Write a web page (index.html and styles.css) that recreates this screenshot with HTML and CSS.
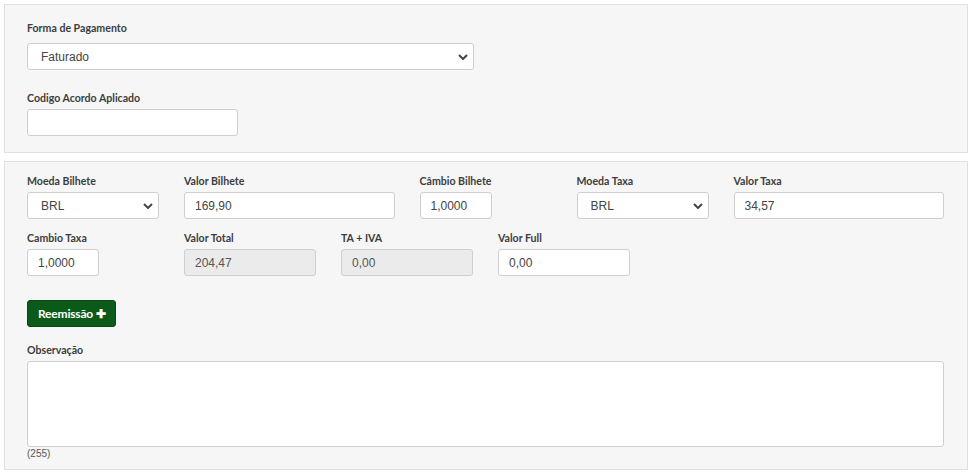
FILE: index.html
```html
<!DOCTYPE html>
<html lang="pt">
<head>
<meta charset="utf-8">
<title>Pagamento</title>
<link rel="stylesheet" href="styles.css">
</head>
<body>
<div class="panel panel-top">
  <div class="field first">
    <label class="lbl">Forma de Pagamento</label>
    <div class="sel-wrap w-446">
      <select class="ctl sel"><option>Faturado</option></select>
      <svg class="chev" viewBox="0 0 10 6" width="10" height="6"><path d="M1 1 L5 5 L9 1" fill="none" stroke="#444" stroke-width="2"/></svg>
    </div>
  </div>
  <div class="field second">
    <label class="lbl">Codigo Acordo Aplicado</label>
    <input class="ctl inp w-210" type="text" value="">
  </div>
</div>

<div class="panel panel-bottom">
  <div class="grid">
    <div class="col c2">
      <label class="lbl">Moeda Bilhete</label>
      <div class="sel-wrap">
        <select class="ctl sel"><option>BRL</option></select>
        <svg class="chev" viewBox="0 0 10 6" width="10" height="6"><path d="M1 1 L5 5 L9 1" fill="none" stroke="#444" stroke-width="2"/></svg>
      </div>
    </div>
    <div class="col c3">
      <label class="lbl">Valor Bilhete</label>
      <input class="ctl inp" type="text" value="169,90">
    </div>
    <div class="col c2">
      <label class="lbl">Câmbio Bilhete</label>
      <input class="ctl inp w-72" type="text" value="1,0000">
    </div>
    <div class="col c2">
      <label class="lbl">Moeda Taxa</label>
      <div class="sel-wrap">
        <select class="ctl sel"><option>BRL</option></select>
        <svg class="chev" viewBox="0 0 10 6" width="10" height="6"><path d="M1 1 L5 5 L9 1" fill="none" stroke="#444" stroke-width="2"/></svg>
      </div>
    </div>
    <div class="col c3">
      <label class="lbl">Valor Taxa</label>
      <input class="ctl inp" type="text" value="34,57">
    </div>
  </div>

  <div class="grid row2">
    <div class="col c2">
      <label class="lbl">Cambio Taxa</label>
      <input class="ctl inp w-72" type="text" value="1,0000">
    </div>
    <div class="col c2">
      <label class="lbl">Valor Total</label>
      <input class="ctl inp disabled" type="text" value="204,47" disabled>
    </div>
    <div class="col c2">
      <label class="lbl">TA + IVA</label>
      <input class="ctl inp disabled" type="text" value="0,00" disabled>
    </div>
    <div class="col c2">
      <label class="lbl">Valor Full</label>
      <input class="ctl inp" type="text" value="0,00">
    </div>
  </div>

  <div class="actions">
    <button class="btn-green" type="button">Reemissão <span class="plus">✚</span></button>
  </div>

  <div class="obs">
    <label class="lbl">Observação</label>
    <textarea class="ctl txt"></textarea>
    <div class="count">(255)</div>
  </div>
</div>
</body>
</html>
```

FILE: styles.css
```css
* { box-sizing: border-box; }

html, body {
  margin: 0;
  background: #ffffff;
}

body {
  padding: 4px 4px 0 4px;
  font-family: Lato, "Liberation Sans", Arial, sans-serif;
  color: #333;
}

.panel {
  background: #f6f6f6;
  border: 1px solid #e0e0e0;
}

.panel-top {
  padding: 15px 23px 16px 22px;
  height: 149px;
}

.panel-bottom {
  margin-top: 8px;
  padding: 11px 23px 0 22px;
  height: 309px;
}

.field { display: flex; flex-direction: column; }
.field.second { margin-top: 20px; }

.lbl {
  display: block;
  font-size: 10.6px;
  font-weight: 700;
  line-height: 16px;
  color: #3d3d3d;
  margin-bottom: 3px;
}

.field.first .lbl { margin-bottom: 7px; }

.ctl {
  font-family: "Liberation Sans", Arial, sans-serif;
  font-size: 12px;
  color: #444;
  background: #fff;
  border: 1px solid #cfcfcf;
  border-radius: 3px;
  outline: none;
  margin: 0;
}

.inp {
  display: block;
  height: 27px;
  width: 100%;
  padding: 0 10px;
}

.inp.disabled {
  background: #ebebeb;
  color: #555;
  -webkit-text-fill-color: #555;
  opacity: 1;
}

.sel-wrap {
  position: relative;
  width: 100%;
}

.sel {
  display: block;
  width: 100%;
  height: 27px;
  padding: 0 24px 0 13px;
  -webkit-appearance: none;
  appearance: none;
}

.chev {
  position: absolute;
  right: 6px;
  top: 11px;
  pointer-events: none;
}

.w-446 { width: 447px; }
.w-210 { width: 211px; height: 27px; }
.w-72 { width: 72px; }

.grid {
  display: grid;
  grid-template-columns: repeat(12, 1fr);
  column-gap: 25px;
}

.row2 { margin-top: 11px; }

.col { display: flex; flex-direction: column; min-width: 0; }
.c2 { grid-column: span 2; }
.c3 { grid-column: span 3; }

.actions { margin-top: 24px; }

.btn-green {
  display: inline-flex;
  align-items: center;
  gap: 3px;
  height: 27px;
  width: 89px;
  padding: 0 10px;
  background: #0b5a19;
  border: 1px solid #094a14;
  border-radius: 3px;
  color: #fff;
  font-family: Lato, "Liberation Sans", Arial, sans-serif;
  font-size: 12px;
  font-weight: 700;
  letter-spacing: -0.2px;
  cursor: pointer;
}

.plus { font-size: 12px; line-height: 1; }

.obs { margin-top: 15px; }

.txt {
  display: block;
  width: 100%;
  height: 86px;
  resize: none;
  padding: 6px 10px;
}

.count {
  font-family: "Liberation Sans", Arial, sans-serif;
  font-size: 10px;
  color: #555;
  line-height: 12px;
  margin-top: 1px;
}
```
